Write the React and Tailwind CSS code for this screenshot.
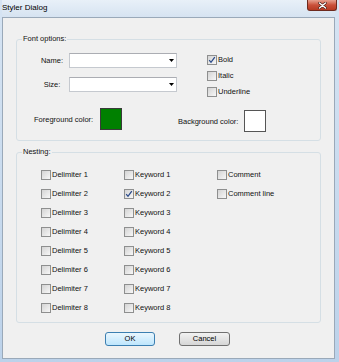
const FONT = { fontFamily: '"Liberation Sans", Arial, sans-serif' }

const Check = ({ checked = false }) => (
  <span className="flex h-[10px] w-[10px] shrink-0 items-center justify-center border border-[#8e8f8f] bg-gradient-to-br from-[#d4d4d4] to-[#f7f7f7]">
    {checked && (
      <svg width="8" height="8" viewBox="0 0 8 8">
        <path d="M1.2 4.2 L3 6.3 L6.8 1.2" fill="none" stroke="#2a4a8a" strokeWidth="1.3" />
      </svg>
    )}
  </span>
)

const CheckRow = ({ label, checked }) => (
  <div className="flex h-[10px] items-center gap-[1px]">
    <Check checked={checked} />
    <span className="leading-none">{label}</span>
  </div>
)

const Combo = () => (
  <div className="ml-[1px] flex h-[15px] w-[108px] items-center justify-end border border-[#c5c9cf] border-t-[#abadb3] bg-white pr-[2px]">
    <svg width="5" height="3" viewBox="0 0 5 3">
      <path d="M0 0 H5 L2.5 3 Z" fill="#000" />
    </svg>
  </div>
)

export default function App() {
  const rows = [1, 2, 3, 4, 5, 6, 7, 8]
  const extra = { 1: 'Comment', 2: 'Comment line' }

  return (
    <div
      className="flex h-[362px] w-[339px] flex-col bg-gradient-to-b from-[#d6e4f3] to-[#bcd2ea] pb-[3px] pl-[2px] pr-[4px] text-[7.5px] text-[#111]"
      style={FONT}
    >
      {/* Title bar */}
      <div className="flex h-[17px] shrink-0 items-start bg-gradient-to-b from-[#e8f0f8] to-[#d6e3f1]">
        <span className="mt-[3px] text-[8px] leading-[10px] text-black">Styler Dialog</span>
        <div className="ml-auto mr-[-2px] flex h-[11px] w-[30px] items-center justify-center rounded-b-[3px] border border-t-0 border-[#6d2a1e] bg-gradient-to-b from-[#e6a08f] via-[#c9503a] to-[#b63a22]">
          <svg width="9" height="7" viewBox="0 0 9 7">
            <path d="M1.5 1 L7.5 6 M7.5 1 L1.5 6" stroke="#3a1510" strokeWidth="2.6" strokeLinecap="round" />
            <path d="M1.5 1 L7.5 6 M7.5 1 L1.5 6" stroke="#fff" strokeWidth="1.5" strokeLinecap="round" />
          </svg>
        </div>
      </div>

      {/* Client area */}
      <div className="flex flex-1 flex-col border border-[#9aa9b9] bg-[#f0f0f0]">
        {/* Font options */}
        <fieldset className="ml-[13px] mt-[16px] w-[305px] rounded-[3px] border border-[#d5dfe5] pb-[8px]">
          <legend className="ml-[5px] px-[1px] leading-[10px]">Font options:</legend>
          <div className="flex items-start">
            <div className="flex flex-col pt-[9px]">
              <div className="flex h-[15px] items-center">
                <span className="ml-[19px] w-[32px] text-center">Name:</span>
                <Combo />
              </div>
              <div className="mt-[9px] flex h-[15px] items-center">
                <span className="ml-[19px] w-[32px] text-center">Size:</span>
                <Combo />
              </div>
            </div>
            <div className="ml-[30px] flex flex-col gap-[6px] pt-[11px]">
              <CheckRow label="Bold" checked />
              <CheckRow label="Italic" />
              <CheckRow label="Underline" />
            </div>
          </div>
          <div className="mt-[11px] flex items-start">
            <span className="ml-[17px] mt-[6px] w-[62px]">Foreground color:</span>
            <div className="ml-[4px] h-[22px] w-[22px] border border-[#3a3a3a] bg-[#008000]" />
            <span className="ml-[56px] mt-[8px] w-[62px]">Background color:</span>
            <div className="ml-[4px] mt-[2px] h-[22px] w-[22px] border border-[#555] bg-white" />
          </div>
        </fieldset>

        {/* Nesting */}
        <fieldset className="ml-[13px] mt-[6px] w-[305px] rounded-[3px] border border-[#d5dfe5] pb-[9px]">
          <legend className="ml-[5px] px-[1px] leading-[10px]">Nesting:</legend>
          <div className="ml-[24px] grid grid-cols-[83px_93px_1fr] gap-y-[9px] pt-[13px]">
            {rows.map((n) => (
              <div key={n} className="contents">
                <CheckRow label={`Delimiter ${n}`} />
                <CheckRow label={`Keyword ${n}`} checked={n === 2} />
                {extra[n] ? <CheckRow label={extra[n]} /> : <div />}
              </div>
            ))}
          </div>
        </fieldset>

        {/* Buttons */}
        <div className="ml-[102px] mt-[9px] flex gap-[24px]">
          <button className="h-[14px] w-[50px] rounded-[3px] border border-[#3c7fb1] bg-gradient-to-b from-[#eaf6fd] to-[#bee6fd] leading-none text-black">
            OK
          </button>
          <button className="h-[14px] w-[51px] rounded-[3px] border border-[#707070] bg-gradient-to-b from-[#f2f2f2] to-[#d6d6d6] leading-none text-black">
            Cancel
          </button>
        </div>
      </div>
    </div>
  )
}
